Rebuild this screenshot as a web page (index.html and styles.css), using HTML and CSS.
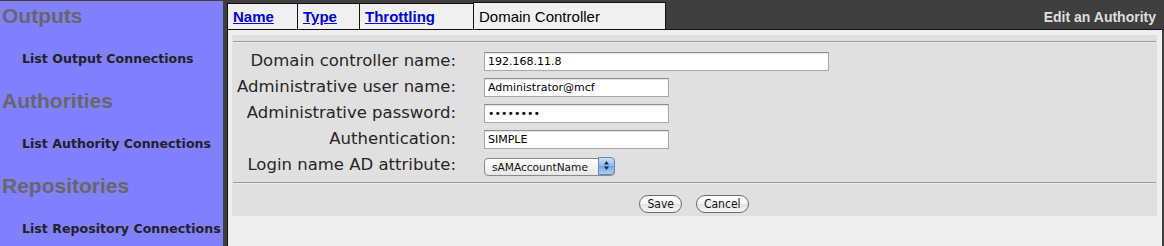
FILE: index.html
```html
<!DOCTYPE html>
<html>
<head>
<meta charset="utf-8">
<title>Edit an Authority</title>
<link rel="stylesheet" href="styles.css">
</head>
<body>
<div class="page">
  <nav class="sidebar">
    <section class="nav-section">
      <h2 class="nav-heading">Outputs</h2>
      <a class="nav-link" href="#">List Output Connections</a>
    </section>
    <section class="nav-section">
      <h2 class="nav-heading">Authorities</h2>
      <a class="nav-link" href="#">List Authority Connections</a>
    </section>
    <section class="nav-section">
      <h2 class="nav-heading">Repositories</h2>
      <a class="nav-link" href="#">List Repository Connections</a>
    </section>
  </nav>
  <main class="main">
    <header class="topbar">
      <div class="tabs">
        <div class="tab tab-name"><a href="#">Name</a></div>
        <div class="tab tab-type"><a href="#">Type</a></div>
        <div class="tab tab-throttling"><a href="#">Throttling</a></div>
        <div class="tab tab-active">Domain Controller</div>
      </div>
      <div class="page-title">Edit an Authority</div>
    </header>
    <div class="panel">
      <div class="form-box">
        <div class="rule"></div>
        <div class="form-grid">
          <label class="field-label">Domain controller name:</label>
          <div class="field"><input class="text-input wide" type="text" value="192.168.11.8"></div>
          <label class="field-label">Administrative user name:</label>
          <div class="field"><input class="text-input" type="text" value="Administrator@mcf"></div>
          <label class="field-label">Administrative password:</label>
          <div class="field"><input class="text-input" type="password" value="password"></div>
          <label class="field-label">Authentication:</label>
          <div class="field"><input class="text-input" type="text" value="SIMPLE"></div>
          <label class="field-label">Login name AD attribute:</label>
          <div class="field">
            <span class="select-wrap">
              <select class="select"><option>sAMAccountName</option></select>
              <span class="select-btn">
                <svg width="7" height="11" viewBox="0 0 7 11"><path d="M3.5 1 L6 4.5 H1 Z" fill="#1a2a44"/><path d="M3.5 10 L6 6.5 H1 Z" fill="#1a2a44"/></svg>
              </span>
            </span>
          </div>
        </div>
        <div class="rule rule-bottom"></div>
        <div class="buttons">
          <button class="btn" type="button">Save</button>
          <button class="btn" type="button">Cancel</button>
        </div>
      </div>
    </div>
  </main>
</div>
</body>
</html>
```
FILE: styles.css
```css
html, body {
  margin: 0;
  padding: 0;
  background: #3f3f3f;
  height: 246px;
  overflow: hidden;
}

.page {
  display: flex;
  padding-top: 1px;
  height: 245px;
}

.sidebar {
  width: 223px;
  background: #8080ff;
  flex: none;
  padding-top: 3px;
  box-sizing: border-box;
  overflow: hidden;
}

.nav-section {
  display: flex;
  flex-direction: column;
}

.nav-section + .nav-section {
  margin-top: 22px;
}

.nav-heading {
  margin: 0;
  padding-left: 2px;
  font-family: "Liberation Sans", Arial, sans-serif;
  font-weight: bold;
  font-size: 21px;
  line-height: 24px;
  color: #676767;
}

.nav-link {
  margin-top: 23px;
  padding-left: 22px;
  font-family: "DejaVu Sans", sans-serif;
  font-weight: bold;
  font-size: 12.6px;
  line-height: 16px;
  color: #222;
  text-decoration: none;
  white-space: nowrap;
}

.main {
  margin-left: 4px;
  width: 935px;
  flex: none;
  display: flex;
  flex-direction: column;
  min-height: 0;
}

.topbar {
  display: flex;
  justify-content: space-between;
  align-items: flex-end;
  height: 28px;
  flex: none;
}

.tabs {
  display: flex;
  align-items: flex-end;
}

.tab {
  box-sizing: border-box;
  height: 26px;
  border-top: 1px solid #111;
  border-left: 1px solid #111;
  background: #f0f0f0;
  padding-left: 5px;
  font-family: "Liberation Sans", Arial, sans-serif;
  font-size: 15px;
  line-height: 26px;
  color: #000;
  white-space: nowrap;
}

.tab a {
  color: #0000ee;
  font-weight: bold;
  text-decoration: underline;
}

.tab-name { width: 70px; }
.tab-type { width: 62px; }
.tab-throttling { width: 114px; }

.tab-active {
  width: 193px;
  height: 27px;
  border-right: 1px solid #111;
  line-height: 28px;
}

.page-title {
  font-family: "Liberation Sans", Arial, sans-serif;
  font-weight: bold;
  font-size: 14px;
  line-height: 16px;
  color: #dedede;
  padding-right: 6px;
  padding-bottom: 4px;
}

.panel {
  flex: 1;
  min-height: 0;
  border-top: 1px solid #111;
  border-left: 1px solid #111;
  background: #efefef;
  padding: 5px 5px 0 4px;
  box-sizing: border-box;
  width: 935px;
}

.form-box {
  background: #e0e0e0;
  padding: 6px 1px 3px 0;
}

.rule {
  height: 0;
  border-top: 1px solid #9a9a9a;
  border-bottom: 1px solid #ececec;
  margin-left: 1px;
}

.form-grid {
  display: grid;
  grid-template-columns: 224px 1fr;
  column-gap: 28px;
  grid-auto-rows: 26px;
  margin-top: 5px;
  align-items: center;
}

.field-label {
  text-align: right;
  font-family: "DejaVu Sans", sans-serif;
  font-size: 16.5px;
  line-height: 20px;
  color: #262626;
  white-space: nowrap;
}

.field {
  display: flex;
  align-items: center;
}

.text-input {
  box-sizing: border-box;
  width: 185px;
  height: 19px;
  margin: 0;
  border: 1px solid #a8a8a8;
  border-top-color: #8e8e8e;
  box-shadow: inset 0 1px 1px rgba(0,0,0,0.12);
  background: #fff;
  padding: 0 3px;
  font-family: "DejaVu Sans", sans-serif;
  font-size: 11px;
  color: #000;
  outline: none;
}

.text-input.wide {
  width: 345px;
}

.select-wrap {
  position: relative;
  display: inline-block;
  width: 131px;
  height: 18px;
  margin-top: 1px;
}

.select {
  appearance: none;
  -webkit-appearance: none;
  box-sizing: border-box;
  width: 131px;
  height: 18px;
  margin: 0;
  border: 1px solid #8a8a8a;
  border-radius: 4px;
  background: linear-gradient(#ffffff, #f1f1f1 60%, #e6e6e6);
  padding: 0 0 0 7px;
  font-family: "DejaVu Sans", sans-serif;
  font-size: 10.6px;
  color: #111;
}

.select-btn {
  position: absolute;
  top: 0;
  right: 0;
  width: 17px;
  height: 18px;
  box-sizing: border-box;
  border: 1px solid #6e86ad;
  border-radius: 0 4px 4px 0;
  background: linear-gradient(#c9def7, #8dbaf0 50%, #6fa6ea 51%, #a9d0f7);
  display: flex;
  align-items: center;
  justify-content: center;
  pointer-events: none;
}

.rule-bottom {
  margin-top: 4px;
}

.buttons {
  display: flex;
  justify-content: center;
  gap: 14px;
  padding-top: 11px;
}

.btn {
  box-sizing: border-box;
  height: 18px;
  margin: 0;
  border: 1px solid #6a6a6a;
  border-radius: 9px;
  background: linear-gradient(#ffffff, #f3f3f3 50%, #e4e4e4 51%, #f6f6f6);
  font-family: "DejaVu Sans Condensed", "DejaVu Sans", sans-serif;
  font-stretch: condensed;
  font-size: 12px;
  line-height: 16px;
  color: #111;
  padding: 0 7px;
}
```
